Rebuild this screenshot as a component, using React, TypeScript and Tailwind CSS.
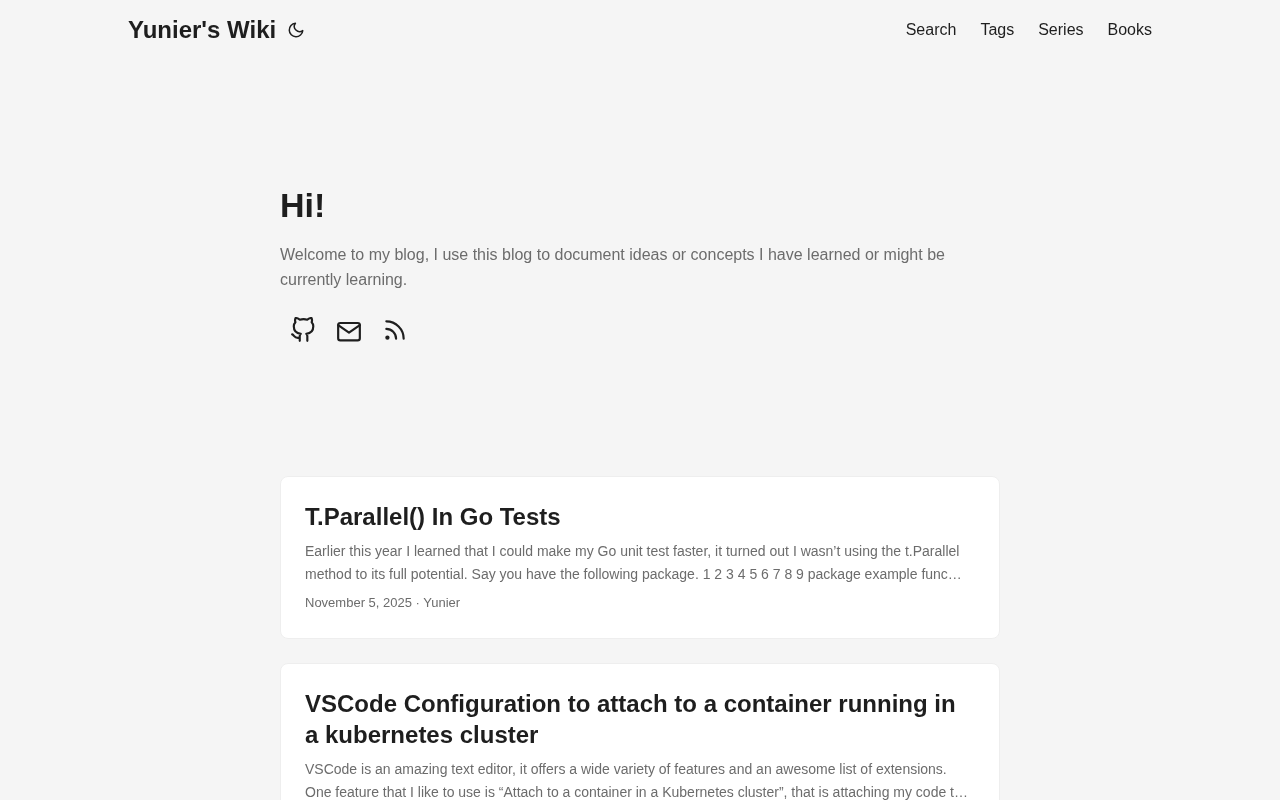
const posts = [
  {
    title: "T.Parallel() In Go Tests",
    summary:
      "Earlier this year I learned that I could make my Go unit test faster, it turned out I wasn’t using the t.Parallel method to its full potential. Say you have the following package. 1 2 3 4 5 6 7 8 9 package example func Add(a, b int) int { return a + b } func Sub(a, b int) int { return a - b }",
    meta: "November 5, 2025 · Yunier",
  },
  {
    title: "VSCode Configuration to attach to a container running in a kubernetes cluster",
    summary:
      "VSCode is an amazing text editor, it offers a wide variety of features and an awesome list of extensions. One feature that I like to use is “Attach to a container in a Kubernetes cluster”, that is attaching my code to a running container so that I can debug it from my editor.",
    meta: "October 12, 2025 · Yunier",
  },
];

const navItems = ["Search", "Tags", "Series", "Books"];

function Icon({ size, viewBox = "0 0 24 24", children }: { size: number; viewBox?: string; children: React.ReactNode }) {
  return (
    <svg
      width={size}
      height={size}
      viewBox={viewBox}
      fill="none"
      stroke="currentColor"
      strokeWidth="2"
      strokeLinecap="round"
      strokeLinejoin="round"
    >
      {children}
    </svg>
  );
}

export default function App() {
  return (
    <div className="min-h-screen bg-[#f5f5f5] text-[#1e1e1e] font-['Liberation_Sans',Arial,sans-serif] text-lg">
      <div className="will-change-transform">
        <header className="mx-auto flex h-[60px] w-[1024px] items-center justify-between">
          <div className="flex items-center">
            <a className="text-2xl font-bold leading-[60px]">Yunier's Wiki</a>
            <button className="ml-[11px] flex items-center">
              <Icon size={18}>
                <path d="M21 12.79A9 9 0 1 1 11.21 3 7 7 0 0 0 21 12.79z" />
              </Icon>
            </button>
          </div>
          <nav className="flex gap-6 text-base">
            {navItems.map((item) => (
              <a key={item}>{item}</a>
            ))}
          </nav>
        </header>

        <main className="mx-auto w-[720px]">
          <section className="pt-[123px] pb-[123px]">
            <h1 className="text-[34px] font-bold leading-[44px]">Hi!</h1>
            <p className="mt-[15px] text-base leading-[25px] text-[#6c6c6c]">
              Welcome to my blog, I use this blog to document ideas or concepts I have learned or might be currently
              learning.
            </p>
            <div className="mt-[15px] flex">
              <a className="p-2.5">
                <Icon size={26}>
                  <path d="M9 19c-5 1.5-5-2.5-7-3m14 6v-3.87a3.37 3.37 0 0 0-.94-2.61c3.14-.35 6.44-1.54 6.44-7A5.44 5.44 0 0 0 20 4.77 5.07 5.07 0 0 0 19.91 1S18.73.65 16 2.48a13.38 13.38 0 0 0-7 0C6.27.65 5.09 1 5.09 1A5.07 5.07 0 0 0 5 4.77a5.44 5.44 0 0 0-1.5 3.75c0 5.42 3.3 6.61 6.44 7A3.37 3.37 0 0 0 9 18.13V22" />
                </Icon>
              </a>
              <a className="p-2.5">
                <Icon size={26} viewBox="0 0 24 21">
                  <path d="M4 4h16c1.1 0 2 .9 2 2v12c0 1.1-.9 2-2 2H4c-1.1 0-2-.9-2-2V6c0-1.1.9-2 2-2z" />
                  <polyline points="22,6 12,13 2,6" />
                </Icon>
              </a>
              <a className="p-2.5">
                <Icon size={26}>
                  <path d="M4 11a9 9 0 0 1 9 9" />
                  <path d="M4 4a16 16 0 0 1 16 16" />
                  <circle cx="5" cy="19" r="1" fill="currentColor" />
                </Icon>
              </a>
            </div>
          </section>

          <div className="flex flex-col gap-6 pb-6">
            {posts.map((post) => (
              <article key={post.title} className="rounded-lg border border-[#eeeeee] bg-white p-6">
                <h2 className="text-2xl font-bold leading-[31px]">{post.title}</h2>
                <p className="mt-2 line-clamp-2 text-sm leading-[23px] text-[#6c6c6c]">{post.summary}</p>
                <footer className="mt-[6px] text-[13px] leading-[22px] text-[#6c6c6c]">{post.meta}</footer>
              </article>
            ))}
          </div>
        </main>
      </div>
    </div>
  );
}
